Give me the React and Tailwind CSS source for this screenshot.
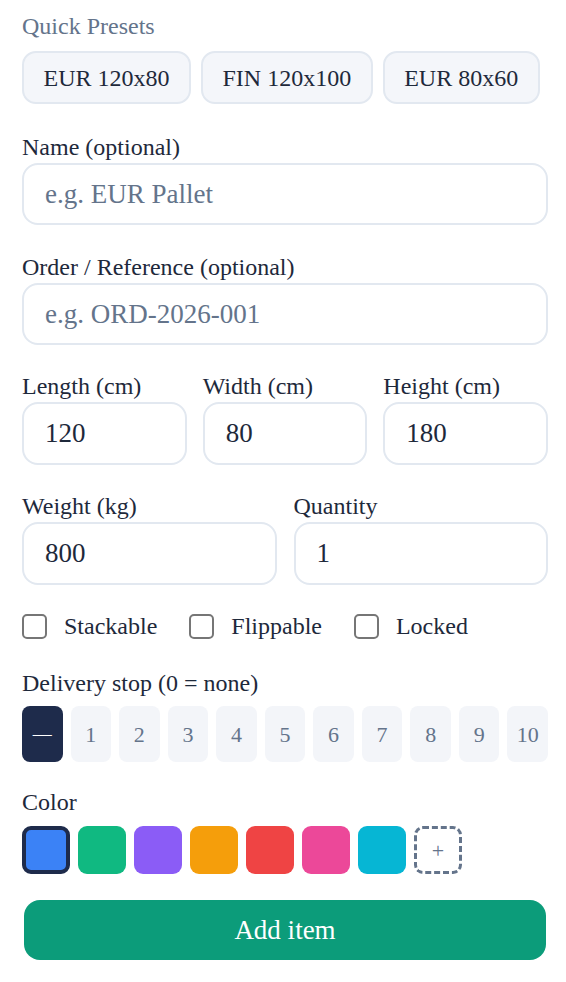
import React, { useState } from "react";

const presets = ["EUR 120x80", "FIN 120x100", "EUR 80x60"];
const stops = [0, 1, 2, 3, 4, 5, 6, 7, 8, 9, 10];
const swatches = ["#3b82f6", "#10b981", "#8b5cf6", "#f59e0b", "#ef4444", "#ec4899", "#06b6d4"];

const Field = ({ label, placeholder, value, className = "", tall }) => (
  <div className={className}>
    <div className="text-[24px] leading-[28px] text-[#1e293b]">{label}</div>
    <input
      className={
        tall
          ? "mt-[2px] w-full h-[63px] rounded-[16px] border-2 border-[#e2e8f0] bg-white px-[21px] text-[27px] text-[#1e293b] placeholder:text-[#64748b] outline-none"
          : "mt-[2px] w-full h-[62px] rounded-[16px] border-2 border-[#e2e8f0] bg-white px-[21px] text-[27px] text-[#1e293b] placeholder:text-[#64748b] outline-none"
      }
      placeholder={placeholder}
      defaultValue={value}
    />
  </div>
);

const Check = ({ label }) => (
  <label className="flex items-center gap-[17px]">
    <span className="w-[25px] h-[25px] rounded-[5px] border-2 border-[#767676] bg-white" />
    <span className="text-[24px] leading-[26px] text-[#1e293b]">{label}</span>
  </label>
);

export default function App() {
  const [stop, setStop] = useState(0);
  const [color, setColor] = useState(0);

  return (
    <div className="pl-[22px] pr-[18px] pt-[12px] pb-[22px] bg-white font-['Liberation_Serif',serif]">
      <div className="text-[24px] leading-[28px] text-[#64748b]">Quick Presets</div>
      <div className="mt-[11px] flex gap-[10px]">
        {presets.map((p) => (
          <button
            key={p}
            className="h-[53px] px-[19.5px] rounded-[14px] border-2 border-[#e2e8f0] bg-[#f4f6fa] text-[24px] text-[#1e293b]"
          >
            {p}
          </button>
        ))}
      </div>

      <Field className="mt-[29px]" label="Name (optional)" placeholder="e.g. EUR Pallet" />
      <Field className="mt-[28px]" label="Order / Reference (optional)" placeholder="e.g. ORD-2026-001" />

      <div className="mt-[27px] grid grid-cols-3 gap-x-4">
        <Field tall label="Length (cm)" value="120" />
        <Field tall label="Width (cm)" value="80" />
        <Field tall label="Height (cm)" value="180" />
      </div>

      <div className="mt-[27px] grid grid-cols-2 gap-x-[17px]">
        <Field tall label="Weight (kg)" value="800" />
        <Field tall label="Quantity" value="1" />
      </div>

      <div className="mt-[28px] flex items-center gap-x-[32px]">
        <Check label="Stackable" />
        <Check label="Flippable" />
        <Check label="Locked" />
      </div>

      <div className="mt-[30px] text-[24px] leading-[28px] text-[#1e293b]">Delivery stop (0 = none)</div>
      <div className="mt-[9px] flex gap-2">
        {stops.map((s) => (
          <button
            key={s}
            onClick={() => setStop(s)}
            className={
              s === stop
                ? "flex-1 h-[56px] rounded-[8px] bg-[#1e2b4b] text-[19px] text-white"
                : "flex-1 h-[56px] rounded-[8px] bg-[#f3f5f9] text-[22px] text-[#64748b]"
            }
          >
            {s === 0 ? "—" : s}
          </button>
        ))}
      </div>

      <div className="mt-[26px] text-[24px] leading-[28px] text-[#1e293b]">Color</div>
      <div className="mt-[10px] flex gap-2">
        {swatches.map((c, i) => (
          <button
            key={c}
            onClick={() => setColor(i)}
            className={
              i === color
                ? "w-[48px] h-[48px] rounded-[9px] border-4 border-[#1e2b4b]"
                : "w-[48px] h-[48px] rounded-[9px]"
            }
            style={{ backgroundColor: c }}
          />
        ))}
        <button className="w-[48px] h-[48px] rounded-[9px] border-[3px] border-dashed border-[#64748b] text-[22px] text-[#64748b] flex items-center justify-center">
          +
        </button>
      </div>

      <button className="mt-[26px] mx-[2px] w-[522px] h-[60px] rounded-[16px] bg-[#0c9c7a] text-[27px] text-white">
        Add item
      </button>
    </div>
  );
}
